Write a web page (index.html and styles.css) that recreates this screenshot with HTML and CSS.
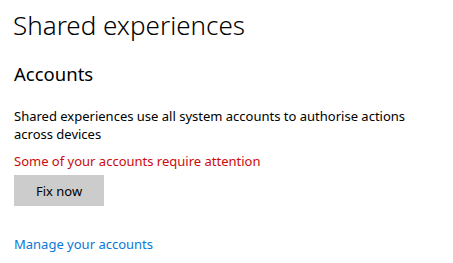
FILE: index.html
```html
<!DOCTYPE html>
<html lang="en">
<head>
    <meta charset="UTF-8">
    <title>Shared experiences</title>
    <link rel="stylesheet" href="styles.css">
</head>
<body>
    <div class="page">
        <h1 class="page-title">Shared experiences</h1>
        <h2 class="section-title">Accounts</h2>
        <p class="description">Shared experiences use all system accounts to authorise actions across devices</p>
        <p class="warning">Some of your accounts require attention</p>
        <button class="fix-button">Fix now</button>
        <a class="manage-link" href="#">Manage your accounts</a>
    </div>
</body>
</html>
```

FILE: styles.css
```css
* {
    margin: 0;
    padding: 0;
    box-sizing: border-box;
}

body {
    font-family: 'Noto Sans', sans-serif;
    background: #fff;
    color: #000;
    overflow: hidden;
}

.page {
    display: flex;
    flex-direction: column;
    align-items: flex-start;
    padding: 7px 14px 0 14px;
}

.page-title {
    font-size: 26px;
    font-weight: 300;
    line-height: 36px;
    margin-left: -1px;
}

.section-title {
    font-size: 18.5px;
    font-weight: 400;
    line-height: 26px;
    margin-top: 18px;
}

.description {
    font-size: 13px;
    line-height: 18px;
    margin-top: 20px;
    max-width: 420px;
}

.warning {
    font-size: 13px;
    line-height: 18px;
    color: #cc0a0a;
    margin-top: 9px;
}

.fix-button {
    font-family: inherit;
    font-size: 13px;
    color: #000;
    background: #ccc;
    border: none;
    width: 90px;
    height: 31px;
    margin-top: 5px;
}

.manage-link {
    font-size: 13px;
    line-height: 18px;
    color: #0a78d7;
    text-decoration: none;
    margin-top: 29px;
}
```
